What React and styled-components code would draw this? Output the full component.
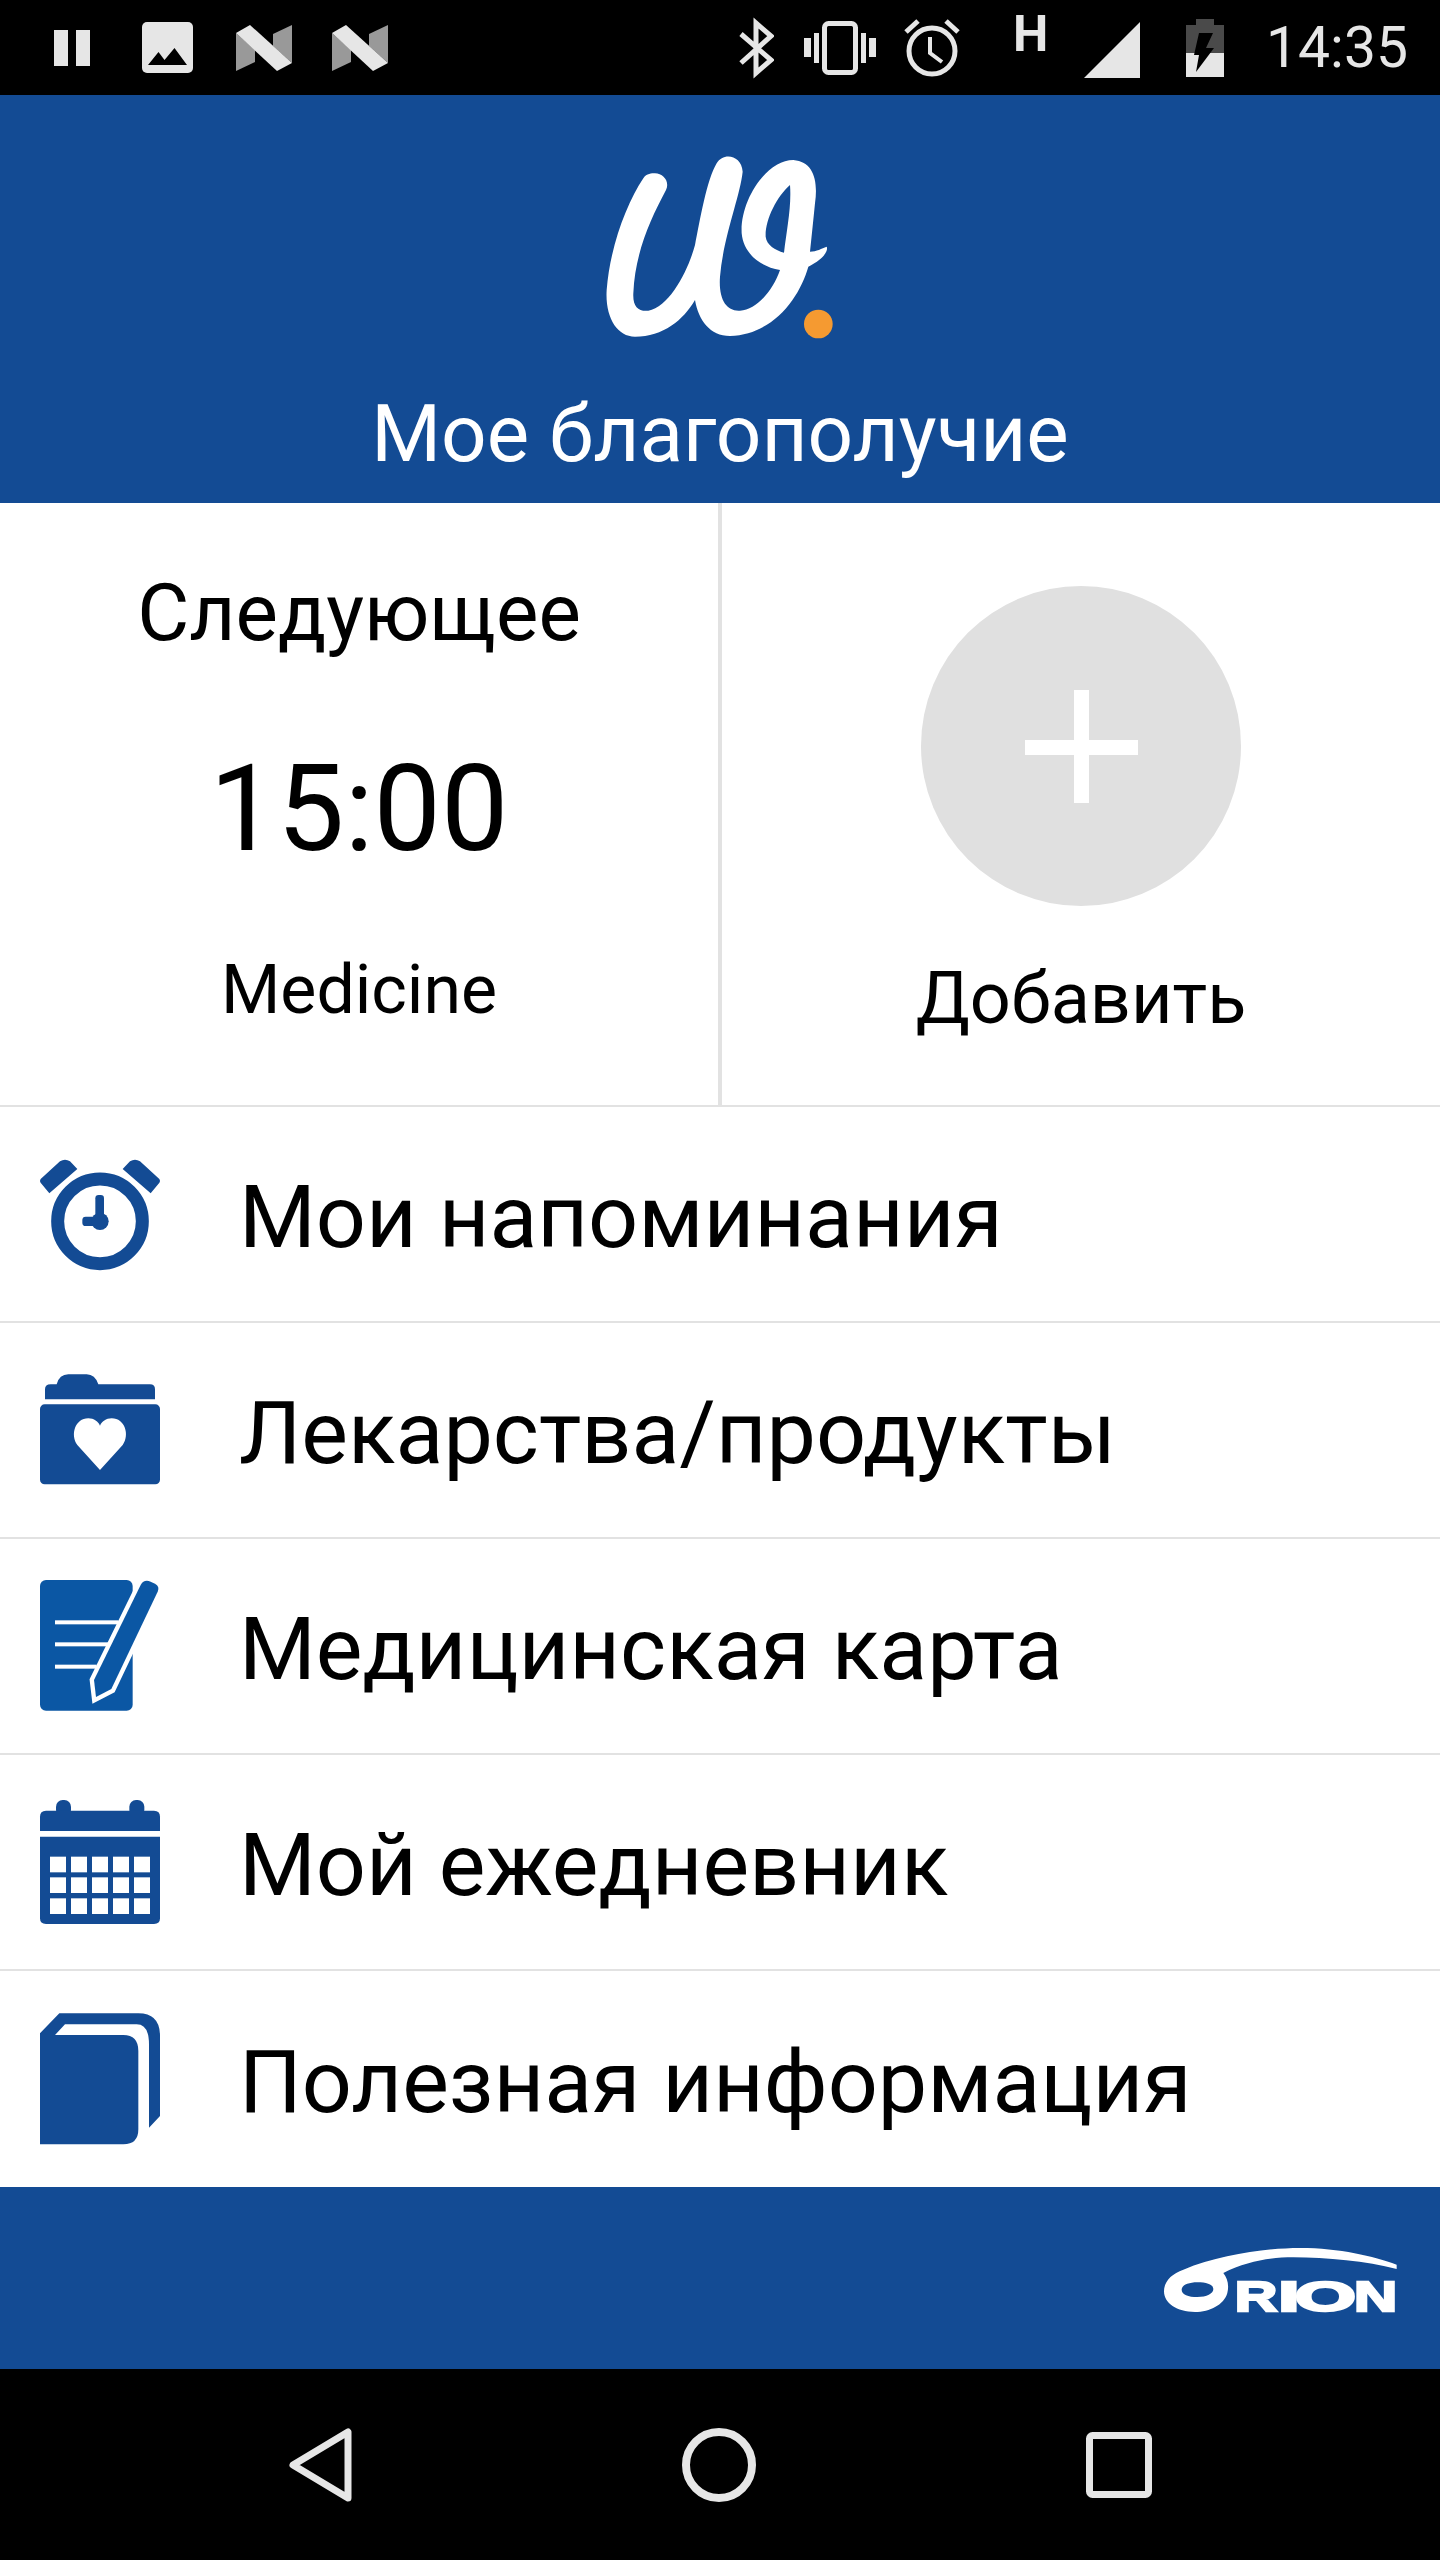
import styled, { createGlobalStyle } from "styled-components"

const BLUE = "#134b94"
const LIGHT = "#e6e6e6"

const Global = createGlobalStyle`
    html, body {
        margin: 0;
        padding: 0;
        background: #fff;
    }
    body {
        font-family: Roboto, "Noto Sans", sans-serif;
        color: #000;
    }
`

const Screen = styled.div`
    width: 1440px;
    height: 2560px;
    display: flex;
    flex-direction: column;
    overflow: hidden;
`

const StatusBar = styled.div`
    height: 95px;
    background: #000;
    display: flex;
    align-items: center;
    padding: 0 32px 0 54px;
    flex-shrink: 0;
`

const StatusGroup = styled.div`
    display: flex;
    align-items: center;
    margin-left: ${(p) => (p.$end ? "auto" : "0")};
`

const StatusIcon = styled.svg`
    display: block;
    height: 95px;
    flex-shrink: 0;
    margin-left: ${(p) => p.$gap || 0}px;
`

const NetworkLetter = styled.span`
    font-size: 50px;
    font-weight: 700;
    line-height: 50px;
    color: ${LIGHT};
    width: 31px;
    margin-left: 55px;
    margin-bottom: 27px;
    display: flex;
    justify-content: center;
`

const Clock = styled.span`
    font-size: 57px;
    line-height: 95px;
    color: ${LIGHT};
    margin-left: 42px;
`

const Header = styled.header`
    height: 408px;
    background: ${BLUE};
    display: flex;
    flex-direction: column;
    align-items: center;
    padding-top: 35px;
    box-sizing: border-box;
    flex-shrink: 0;
`

const Logo = styled.svg`
    display: block;
    width: 320px;
    height: 220px;
`

const Title = styled.h1`
    margin: 38px 0 0;
    font-size: 80px;
    line-height: 92px;
    font-weight: 400;
    color: #fff;
`

const TopPanel = styled.section`
    height: 604px;
    display: grid;
    grid-template-columns: 1fr 4px 1fr;
    border-bottom: 2px solid #e2e2e2;
    box-sizing: border-box;
    flex-shrink: 0;
`

const Divider = styled.div`
    background: #e2e2e2;
`

const NextColumn = styled.div`
    display: flex;
    flex-direction: column;
    align-items: center;
    padding-top: 67px;
`

const NextLabel = styled.div`
    font-size: 80px;
    line-height: 86px;
`

const NextTime = styled.div`
    font-size: 120px;
    line-height: 140px;
    margin-top: 83px;
`

const NextName = styled.div`
    font-size: 68px;
    line-height: 80px;
    margin-top: 71px;
`

const AddColumn = styled.div`
    display: flex;
    flex-direction: column;
    align-items: center;
    padding-top: 83px;
`

const AddCircle = styled.div`
    width: 320px;
    height: 320px;
    border-radius: 50%;
    background: #e0e0e0;
    position: relative;

    &::before, &::after {
        content: "";
        position: absolute;
        background: #fff;
    }
    &::before {
        left: 104px;
        top: 154px;
        width: 113px;
        height: 15px;
    }
    &::after {
        left: 153px;
        top: 104px;
        width: 15px;
        height: 113px;
    }
`

const AddLabel = styled.div`
    font-size: 72px;
    line-height: 86px;
    margin-top: 50px;
`

const Menu = styled.nav`
    display: flex;
    flex-direction: column;
    flex-shrink: 0;
`

const Row = styled.div`
    height: 216px;
    box-sizing: border-box;
    display: flex;
    align-items: center;
    padding-left: 20px;
    border-bottom: ${(p) => (p.$last ? "none" : "2px solid #e2e2e2")};
`

const RowIcon = styled.svg`
    display: block;
    width: 160px;
    height: 160px;
    flex-shrink: 0;
`

const RowLabel = styled.span`
    margin-left: 59px;
    padding-top: 6px;
    font-size: 88px;
    line-height: 100px;
`

const Footer = styled.footer`
    height: 182px;
    background: ${BLUE};
    display: flex;
    align-items: center;
    justify-content: flex-end;
    padding-right: 20px;
    box-sizing: border-box;
    flex-shrink: 0;
`

const OrionLogo = styled.svg`
    display: block;
    width: 280px;
    height: 110px;
`

const NavBar = styled.div`
    flex: 1;
    background: #000;
    display: flex;
    align-items: center;
    justify-content: center;
    gap: 330px;
`

const NavIcon = styled.svg`
    display: block;
    height: 80px;
`

function AlarmIcon() {
    return (
        <RowIcon viewBox="0 10 480 480">
            <circle cx="240" cy="272" r="127" fill="none" stroke={BLUE} strokeWidth="39" />
            <rect x="226" y="193" width="26" height="80" rx="10" fill={BLUE} />
            <rect x="187" y="258" width="55" height="28" rx="10" fill={BLUE} />
            <circle cx="240" cy="272" r="26" fill={BLUE} />
            <path d="M62 145 L120 92 Q135 82 150 92 L172 115 L88 188 L65 160 Q57 152 62 145 Z" fill={BLUE} />
            <path d="M418 145 L360 92 Q345 82 330 92 L308 115 L392 188 L415 160 Q423 152 418 145 Z" fill={BLUE} />
        </RowIcon>
    )
}

function FolderIcon() {
    return (
        <RowIcon viewBox="0 0 480 480">
            <path d="M75 148 V118 Q75 103 92 103 H110 Q118 73 145 73 H200 Q225 73 235 103 H390 Q405 103 405 118 V148 Z" fill={BLUE} />
            <rect x="60" y="163" width="360" height="240" rx="14" fill={BLUE} />
            <path d="M240 360 L172 285 C150 255 165 205 205 205 C222 205 235 215 240 227 C245 215 258 205 275 205 C315 205 330 255 308 285 Z" fill="#fff" />
        </RowIcon>
    )
}

function NoteIcon() {
    const color = "#0b57a4"
    return (
        <RowIcon viewBox="0 3 480 480">
            <rect x="60" y="45" width="278" height="392" rx="18" fill={color} />
            <rect x="105" y="166" width="190" height="12" fill="#fff" />
            <rect x="105" y="232" width="160" height="12" fill="#fff" />
            <rect x="105" y="299" width="125" height="12" fill="#fff" />
            <path
                d="M362 60 Q372 42 392 50 L405 56 Q420 64 413 80 L274 372 L228 396 L222 345 Z"
                fill={color}
                stroke="#fff"
                strokeWidth="26"
                paintOrder="stroke"
                strokeLinejoin="miter"
            />
        </RowIcon>
    )
}

function CalendarIcon() {
    const cols = [90, 153, 216, 279, 342]
    const rows = [215, 277, 340]
    return (
        <RowIcon viewBox="0 -9 480 480">
            <rect x="108" y="45" width="45" height="50" rx="20" fill={BLUE} />
            <rect x="328" y="45" width="45" height="50" rx="20" fill={BLUE} />
            <path d="M60 138 V95 Q60 77 78 77 H402 Q420 77 420 95 V138 Z" fill={BLUE} />
            <path d="M60 155 H420 V400 Q420 417 402 417 H78 Q60 417 60 400 Z" fill={BLUE} />
            {rows.map((y) => cols.map((x) => <rect key={x + "-" + y} x={x} y={y} width="48" height="47" fill="#fff" />))}
        </RowIcon>
    )
}

function BookIcon() {
    return (
        <RowIcon viewBox="0 -6 480 480">
            <path
                d="M60 97 L118 37 H355 Q420 37 420 105 V345 L387 380 V130 Q387 70 350 70 H135 L105 102 H310 Q355 102 355 150 V385 Q355 430 310 430 H60 Z"
                fill={BLUE}
            />
        </RowIcon>
    )
}

const items = [
    { label: "Мои напоминания", Icon: AlarmIcon },
    { label: "Лекарства/продукты", Icon: FolderIcon },
    { label: "Медицинская карта", Icon: NoteIcon },
    { label: "Мой ежедневник", Icon: CalendarIcon },
    { label: "Полезная информация", Icon: BookIcon },
]

// wordmark letters, stretched one by one to the logo's wide cut
const orionLetters = [
    { ch: "R", x: 284, sx: 1.36 },
    { ch: "I", x: 414, sx: 1.8 },
    { ch: "O", x: 464, sx: 1.82 },
    { ch: "N", x: 642, sx: 1.38 },
]

export default function App() {
    return (
        <Screen>
            <Global />
            <StatusBar>
                <StatusGroup>
                    <StatusIcon width="36" viewBox="0 0 36 95">
                        <rect x="0" y="30" width="14" height="36" fill={LIGHT} />
                        <rect x="22" y="30" width="14" height="36" fill={LIGHT} />
                    </StatusIcon>
                    <StatusIcon $gap={52} width="51" viewBox="0 0 51 95">
                        <rect x="0" y="22" width="51" height="51" rx="5" fill={LIGHT} />
                        <polygon points="6,65 16.5,52 22.5,60 32.5,48 45,65" fill="#000" />
                    </StatusIcon>
                    {[0, 1].map((i) => (
                        <StatusIcon key={i} $gap={i ? 40 : 43} width="56" viewBox="0 0 56 95">
                            <polygon points="0,33 0,71 19,62 19,50" fill="#999" />
                            <polygon points="56,25 37,34 37,46 56,63" fill="#999" />
                            <polygon points="0,33 14,25 56,63 41,71" fill={LIGHT} />
                        </StatusIcon>
                    ))}
                </StatusGroup>
                <StatusGroup $end>
                    <StatusIcon width="36" viewBox="0 0 36 95">
                        <path d="M3 34 L33 60 L18 73 V23 L33 36 L3 63" fill="none" stroke={LIGHT} strokeWidth="5" />
                    </StatusIcon>
                    <StatusIcon $gap={30} width="72" viewBox="0 0 72 95">
                        <rect x="20.5" y="23.5" width="31" height="49" rx="4" fill="none" stroke={LIGHT} strokeWidth="5" />
                        <rect x="0" y="38" width="7" height="19" fill={LIGHT} />
                        <rect x="10" y="33" width="5" height="30" fill={LIGHT} />
                        <rect x="57" y="33" width="5" height="30" fill={LIGHT} />
                        <rect x="65" y="38" width="7" height="19" fill={LIGHT} />
                    </StatusIcon>
                    <StatusIcon $gap={28} width="56" viewBox="0 0 56 95">
                        <circle cx="28" cy="51" r="23" fill="none" stroke={LIGHT} strokeWidth="5" />
                        <path d="M26 37 V53 L38 62" fill="none" stroke={LIGHT} strokeWidth="4" />
                        <path d="M2 32 L14 21 M54 32 L42 21" fill="none" stroke={LIGHT} strokeWidth="5" />
                    </StatusIcon>
                    <NetworkLetter>H</NetworkLetter>
                    <StatusIcon $gap={38} width="56" viewBox="0 0 56 95">
                        <polygon points="0,78 56,78 56,22" fill={LIGHT} />
                    </StatusIcon>
                    <StatusIcon $gap={46} width="38" viewBox="0 0 38 95">
                        <rect x="10" y="19" width="18" height="7" fill="#4a4a4a" />
                        <rect x="0" y="25" width="38" height="28" fill="#4a4a4a" />
                        <rect x="0" y="53" width="38" height="24" fill={LIGHT} />
                        <polygon points="13,33 27,33 20,48 28,48 10,72 13,55 8,55" fill="#000" />
                    </StatusIcon>
                    <Clock>14:35</Clock>
                </StatusGroup>
            </StatusBar>

            <Header>
                <Logo viewBox="0 0 960 660">
                    <path
                        fillRule="evenodd"
                        fill="#fff"
                        d="M285 130 C310 130 330 155 318 180 C270 270 225 370 220 490 C218 530 235 545 265 542 C330 530 385 420 405 345 C420 270 440 150 470 100 C490 65 545 75 548 125 C540 200 490 320 480 440 C475 510 500 545 540 542 C590 540 640 480 660 420 C600 410 550 370 545 310 C540 210 620 90 700 90 C760 95 775 150 765 220 C760 270 755 320 750 365 C770 365 785 355 800 350 C805 360 795 385 745 410 C720 500 640 615 510 618 C450 618 415 570 405 510 C370 570 310 620 225 620 C170 620 135 560 140 480 C150 350 200 220 250 145 C260 130 275 130 285 130 Z M690 165 C650 200 615 270 617 320 C620 345 645 360 672 368 C680 300 695 230 690 165 Z"
                    />
                    <circle cx="775" cy="582" r="43" fill="#f59a31" />
                </Logo>
                <Title>Мое благополучие</Title>
            </Header>

            <TopPanel>
                <NextColumn>
                    <NextLabel>Следующее</NextLabel>
                    <NextTime>15:00</NextTime>
                    <NextName>Medicine</NextName>
                </NextColumn>
                <Divider />
                <AddColumn>
                    <AddCircle />
                    <AddLabel>Добавить</AddLabel>
                </AddColumn>
            </TopPanel>

            <Menu>
                {items.map(({ label, Icon }, i) => (
                    <Row key={label} $last={i === items.length - 1}>
                        <Icon />
                        <RowLabel>{label}</RowLabel>
                    </Row>
                ))}
            </Menu>

            <Footer>
                <OrionLogo viewBox="0 0 840 330">
                    <path
                        fill="#fff"
                        fillRule="evenodd"
                        d="M72 205 C72 175 95 152 130 140 C240 95 380 75 480 75 C600 75 700 100 770 125 L770 138 C680 115 560 103 460 103 C390 103 320 115 250 150 C262 165 268 185 262 210 C252 245 210 267 165 267 C110 267 72 240 72 205 Z M125 200 C125 215 145 222 172 222 C200 222 220 212 220 198 C220 185 200 178 172 178 C145 178 125 187 125 200 Z"
                    />
                    {orionLetters.map(({ ch, x, sx }) => (
                        <text
                            key={ch}
                            transform={`translate(${x} 264) scale(${sx} 1)`}
                            fill="#fff"
                            stroke="#fff"
                            strokeWidth="7"
                            fontFamily="'Liberation Sans', Arial, sans-serif"
                            fontWeight="700"
                            fontSize="130"
                        >
                            {ch}
                        </text>
                    ))}
                </OrionLogo>
            </Footer>

            <NavBar>
                <NavIcon width="64" viewBox="0 0 64 80">
                    <path d="M60 7 V73 L5 40 Z" fill="none" stroke={LIGHT} strokeWidth="7" strokeLinejoin="round" />
                </NavIcon>
                <NavIcon width="74" viewBox="0 0 74 80">
                    <circle cx="37" cy="40" r="33" fill="none" stroke={LIGHT} strokeWidth="8" />
                </NavIcon>
                <NavIcon width="66" viewBox="0 0 66 80">
                    <rect x="3.5" y="10.5" width="59" height="59" rx="3" fill="none" stroke={LIGHT} strokeWidth="7" />
                </NavIcon>
            </NavBar>
        </Screen>
    )
}
